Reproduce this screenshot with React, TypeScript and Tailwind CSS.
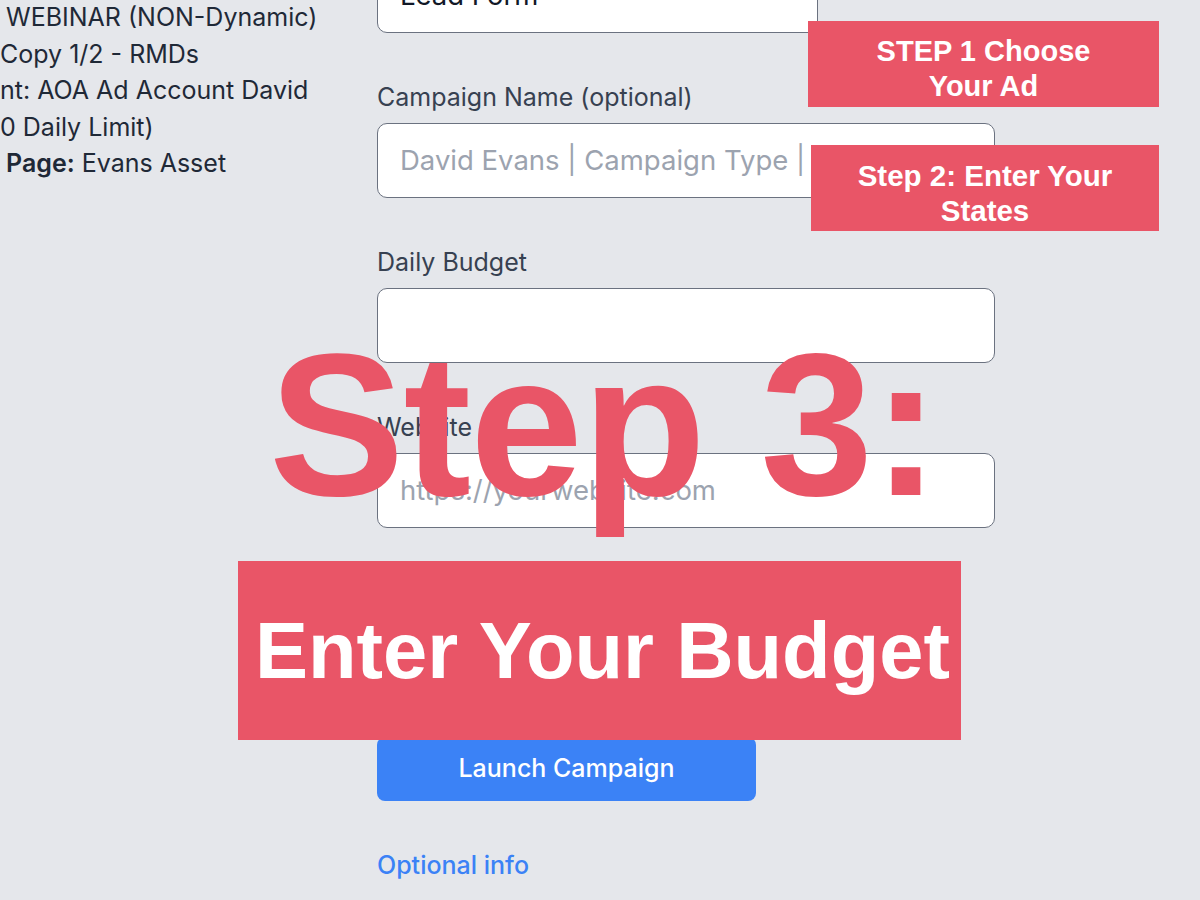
import React from "react";

const font = { fontFamily: "Inter, 'Noto Sans', sans-serif" };
const bold = { fontFamily: "'Liberation Sans', Arial, sans-serif" };

function Field({ label, placeholder }: { label: string; placeholder?: string }) {
  return (
    <>
      <div className="mt-[49px] h-[30px] whitespace-nowrap text-[25px] leading-[30px] text-[#374151]">{label}</div>
      <div className="mt-[11px] flex h-[75px] items-center overflow-hidden rounded-[10px] border-[1.5px] border-[#6b7280] bg-white px-[22px]">
        {placeholder && <span className="whitespace-nowrap text-[27.5px] text-[#9ca3af]">{placeholder}</span>}
      </div>
    </>
  );
}

export default function App() {
  return (
    <div className="relative h-[900px] w-[1200px] overflow-hidden bg-[#e5e7eb]" style={font}>
      <div className="flex">
        {/* left summary column */}
        <div className="w-[377px] shrink-0 text-[25px] leading-[36.5px] text-[#1f2937]">
          <div className="-mt-[1px] whitespace-nowrap pl-[6px]">WEBINAR (NON-Dynamic)</div>
          <div className="whitespace-nowrap">Copy 1/2 - RMDs</div>
          <div className="whitespace-nowrap">nt: AOA Ad Account David</div>
          <div className="whitespace-nowrap">0 Daily Limit)</div>
          <div className="whitespace-nowrap pl-[6px]">
            <span className="font-semibold">Page:</span> Evans Asset
          </div>
        </div>

        {/* form column */}
        <div className="flex w-[618px] flex-col">
          <div className="-mt-[42px] flex h-[75px] w-[441px] items-center justify-between rounded-[10px] border-[1.5px] border-[#6b7280] bg-white pl-[22px] pr-[28px]">
            <span className="text-[27.5px] text-[#111827]">Lead Form</span>
            <svg width="16" height="16" viewBox="0 0 24 24" fill="none" stroke="#374151" strokeWidth="3" strokeLinecap="round" strokeLinejoin="round">
              <path d="M6 9l6 6 6-6" />
            </svg>
          </div>
          <Field label="Campaign Name (optional)" placeholder="David Evans | Campaign Type | Date" />
          <Field label="Daily Budget" />
          <Field label="Website" placeholder="https://yourwebsite.com" />
          <div className="h-[209px]" />
          <button className="flex h-[64px] w-[379px] items-center justify-center rounded-[8px] bg-[#3b82f6] text-[25px] font-medium text-white">
            Launch Campaign
          </button>
          <div className="mt-[49px] h-[30px] text-[25px] font-medium leading-[30px] text-[#3b82f6]">Optional info</div>
        </div>
      </div>

      {/* overlays */}
      <div
        className="absolute left-[808px] top-[21px] flex h-[86px] w-[351px] items-center justify-center bg-[#e95567] pt-[10px] text-center text-[29px] font-bold leading-[35px] text-white"
        style={bold}
      >
        STEP 1 Choose
        <br />
        Your Ad
      </div>
      <div
        className="absolute left-[811px] top-[145px] flex h-[86px] w-[348px] items-center justify-center bg-[#e95567] pt-[10px] text-center text-[29.5px] font-bold leading-[35px] text-white"
        style={bold}
      >
        Step 2: Enter Your
        <br />
        States
      </div>
      <div
        className="absolute left-[269px] top-[323px] whitespace-nowrap text-[203px] font-bold leading-none tracking-[-1px] text-[#e95567]"
        style={bold}
      >
        Step 3:
      </div>
      <div
        className="absolute left-[238px] top-[561px] flex h-[179px] w-[723px] items-center bg-[#e95567] pl-[17px] text-[79.5px] font-bold leading-none text-white"
        style={bold}
      >
        <span className="whitespace-nowrap">Enter Your Budget</span>
      </div>
    </div>
  );
}
